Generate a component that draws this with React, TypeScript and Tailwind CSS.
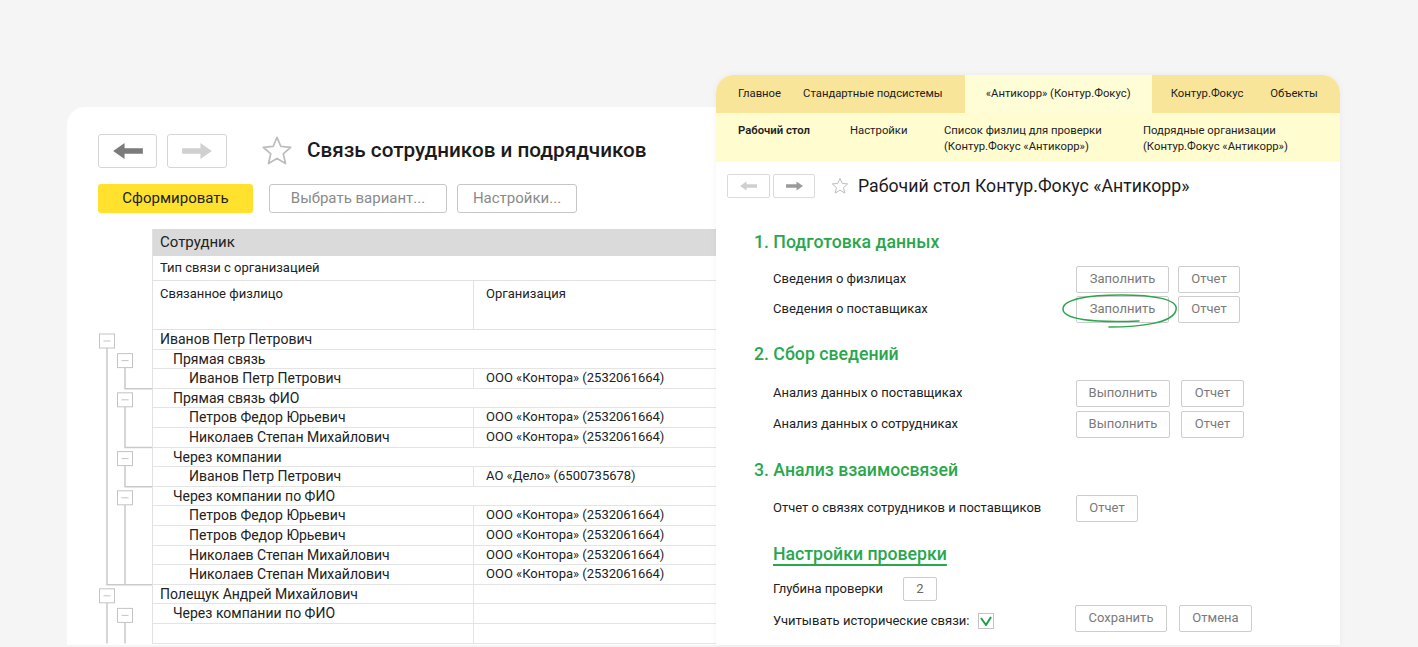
import React from "react";

const ROW_H = 19.6;

type Row = { level: number; name: string; org?: string; split?: boolean };

const KONTORA = "ООО «Контора» (2532061664)";

const rows: Row[] = [
  { level: 0, name: "Иванов Петр Петрович" },
  { level: 1, name: "Прямая связь" },
  { level: 2, name: "Иванов Петр Петрович", org: KONTORA, split: true },
  { level: 1, name: "Прямая связь ФИО" },
  { level: 2, name: "Петров Федор Юрьевич", org: KONTORA, split: true },
  { level: 2, name: "Николаев Степан Михайлович", org: KONTORA, split: true },
  { level: 1, name: "Через компании" },
  { level: 2, name: "Иванов Петр Петрович", org: "АО «Дело» (6500735678)", split: true },
  { level: 1, name: "Через компании по ФИО" },
  { level: 2, name: "Петров Федор Юрьевич", org: KONTORA, split: true },
  { level: 2, name: "Петров Федор Юрьевич", org: KONTORA, split: true },
  { level: 2, name: "Николаев Степан Михайлович", org: KONTORA, split: true },
  { level: 2, name: "Николаев Степан Михайлович", org: KONTORA, split: true },
  { level: 0, name: "Полещук Андрей Михайлович", split: true },
  { level: 1, name: "Через компании по ФИО", split: true },
  { level: 3, name: "", split: true },
];

const indent: Record<number, string> = {
  0: "pl-[7px]",
  1: "pl-[20px]",
  2: "pl-[36px]",
  3: "pl-[7px]",
};

function Arrow({ dir, color, w, h }: { dir: "left" | "right"; color: string; w: number; h: number }) {
  return (
    <svg width={w} height={h} viewBox="0 0 26 14">
      <path
        d="M0 7 L10 0 L10 4.5 L26 4.5 L26 9.5 L10 9.5 L10 14 Z"
        fill={color}
        transform={dir === "right" ? "translate(26 0) scale(-1 1)" : undefined}
      />
    </svg>
  );
}

function Star({ size }: { size: number }) {
  return (
    <svg width={size} height={size} viewBox="0 0 24 24">
      <path
        d="M12 1.8 L14.9 8.6 L22.3 9.2 L16.7 14.1 L18.4 21.4 L12 17.6 L5.6 21.4 L7.3 14.1 L1.7 9.2 L9.1 8.6 Z"
        fill="none"
        stroke="#bdbdbd"
        strokeWidth="1.3"
        strokeLinejoin="round"
      />
    </svg>
  );
}

function TreeGutter() {
  const top = (i: number) => i * ROW_H;
  const bottom = (i: number) => (i + 1) * ROW_H;
  const boxes: { row: number; x: number }[] = [
    { row: 0, x: 1.5 },
    { row: 1, x: 19.5 },
    { row: 3, x: 19.5 },
    { row: 6, x: 19.5 },
    { row: 8, x: 19.5 },
    { row: 13, x: 1.5 },
    { row: 14, x: 19.5 },
  ];
  const total = rows.length * ROW_H;
  const stroke = "#c9c9c9";
  return (
    <svg width={54} height={total} className="block">
      {/* level 0 connectors */}
      <path d={`M9 ${top(0) + 18} V${bottom(12)} H54`} fill="none" stroke={stroke} strokeWidth="1.5" />
      <path d={`M9 ${top(13) + 18} V${total}`} fill="none" stroke={stroke} strokeWidth="1.5" />
      {/* level 1 connectors */}
      <path d={`M27 ${top(1) + 18} V${bottom(2)} H54`} fill="none" stroke={stroke} strokeWidth="1.5" />
      <path d={`M27 ${top(3) + 18} V${bottom(5)} H54`} fill="none" stroke={stroke} strokeWidth="1.5" />
      <path d={`M27 ${top(6) + 18} V${bottom(7)} H54`} fill="none" stroke={stroke} strokeWidth="1.5" />
      <path d={`M27 ${top(8) + 18} V${bottom(12)}`} fill="none" stroke={stroke} strokeWidth="1.5" />
      <path d={`M27 ${top(14) + 18} V${total}`} fill="none" stroke={stroke} strokeWidth="1.5" />
      {boxes.map((b) => (
        <g key={b.row}>
          <rect x={b.x} y={top(b.row) + 4} width={15} height={14} fill="#fff" stroke="#c4c4c4" strokeWidth="1" />
          <line x1={b.x + 4} x2={b.x + 11} y1={top(b.row) + 11} y2={top(b.row) + 11} stroke="#c4c4c4" strokeWidth="1" />
        </g>
      ))}
    </svg>
  );
}

function LeftPanel() {
  return (
    <div className="ml-[67px] h-[538px] w-[700px] rounded-tl-[18px] bg-white pl-[31px] pt-[27px]">
      <div className="flex items-center">
        <div className="flex h-[34px] w-[59px] items-center justify-center rounded-[3px] border border-[#d6d6d6]">
          <Arrow dir="left" color="#7b7b7b" w={30} h={16} />
        </div>
        <div className="ml-[10px] flex h-[34px] w-[60px] items-center justify-center rounded-[3px] border border-[#d6d6d6]">
          <Arrow dir="right" color="#d0d0d0" w={30} h={16} />
        </div>
        <div className="ml-[34px]">
          <Star size={32} />
        </div>
        <h1 className="ml-[14px] text-[20.7px] font-medium text-[#1b1b1b]">Связь сотрудников и подрядчиков</h1>
      </div>

      <div className="mt-[16px] flex items-center gap-[16px] text-[15px]">
        <button className="h-[29px] w-[155px] rounded-[3px] bg-[#ffe12e] text-[#222]">Сформировать</button>
        <button className="h-[29px] w-[178px] rounded-[3px] border border-[#c6c6c6] text-[#8a8a8a]">Выбрать вариант...</button>
        <button className="-ml-[6px] h-[29px] w-[120px] rounded-[3px] border border-[#c6c6c6] text-[#8a8a8a]">Настройки...</button>
      </div>

      <div className="mt-[16px] flex">
        <div className="w-[54px] shrink-0 pt-[101px]">
          <TreeGutter />
        </div>
        <div className="flex-1 border-l border-[#e1e1e1] text-[#222]">
          <div className="flex h-[27px] items-center bg-[#dadada] pl-[7px] text-[15px]">Сотрудник</div>
          <div className="flex h-[25px] items-center border-b border-[#e1e1e1] pl-[7px] text-[13px]">Тип связи с организацией</div>
          <div className="flex h-[49px] border-b border-[#e1e1e1] text-[13px]">
            <div className="w-[321px] border-r border-[#e1e1e1] pl-[7px] pt-[3px]">Связанное физлицо</div>
            <div className="pl-[12px] pt-[3px]">Организация</div>
          </div>
          {rows.map((r, i) => (
            <div key={i} className="flex h-[19.6px] border-b border-[#e4e4e4] text-[14px] leading-[18px]">
              <div className={`${indent[r.level]} ${r.split ? "w-[321px] border-r border-[#e4e4e4]" : ""} whitespace-nowrap`}>
                {r.name}
              </div>
              {r.org && <div className="pl-[12px] text-[13px] whitespace-nowrap">{r.org}</div>}
            </div>
          ))}
        </div>
      </div>
    </div>
  );
}

function Btn({ w, children }: { w: string; children: React.ReactNode }) {
  return (
    <div className={`${w} flex h-[27px] items-center justify-center rounded-[2px] border border-[#cdcdcd] text-[13px] text-[#7a7a7a]`}>
      {children}
    </div>
  );
}

function Heading({ children, className = "" }: { children: React.ReactNode; className?: string }) {
  return (
    <div className={`flex h-[24px] items-center pl-[38px] text-[17.7px] font-medium text-[#2aa74d] ${className}`}>{children}</div>
  );
}

function Line({ label, children, className = "" }: { label: string; children?: React.ReactNode; className?: string }) {
  return (
    <div className={`flex items-center pl-[57px] ${className}`}>
      <div className="w-[303px] text-[13px] text-[#222]">{label}</div>
      {children}
    </div>
  );
}

function RightPanel() {
  return (
    <div className="absolute left-[716px] top-[75px] h-[570px] w-[624px] overflow-hidden rounded-t-[18px] bg-white shadow-[0_0_6px_rgba(0,0,0,0.05)]">
      <div className="flex h-[38px] items-stretch bg-[#f9e59a] text-[11.3px] text-[#222]">
        <span className="self-center pl-[22px]">Главное</span>
        <span className="ml-[22px] self-center">Стандартные подсистемы</span>
        <span className="ml-[22px] flex w-[187px] items-center justify-center bg-[#fffdd6]">«Антикорр» (Контур.Фокус)</span>
        <span className="ml-[19px] self-center">Контур.Фокус</span>
        <span className="ml-[27px] self-center">Объекты</span>
      </div>
      <div className="flex h-[49px] bg-[#fffdd0] pl-[22px] pt-[10px] text-[11.3px] leading-[16px] text-[#222]">
        <div className="w-[112px] font-semibold">Рабочий стол</div>
        <div className="w-[94px]">Настройки</div>
        <div className="w-[199px]">
          Список физлиц для проверки
          <br />
          (Контур.Фокус «Антикорр»)
        </div>
        <div>
          Подрядные организации
          <br />
          (Контур.Фокус «Антикорр»)
        </div>
      </div>

      <div className="mt-[11px] flex items-center pl-[11px]">
        <div className="flex h-[24px] w-[43px] items-center justify-center rounded-[2px] border border-[#dadada]">
          <Arrow dir="left" color="#cfcfcf" w={17} h={10} />
        </div>
        <div className="ml-[3px] flex h-[24px] w-[42px] items-center justify-center rounded-[2px] border border-[#dadada]">
          <Arrow dir="right" color="#9a9a9a" w={17} h={10} />
        </div>
        <div className="ml-[16px]">
          <Star size={18} />
        </div>
        <div className="ml-[9px] text-[17.7px] text-[#1b1b1b]">Рабочий стол Контур.Фокус «Антикорр»</div>
      </div>

      <Heading className="mt-[31px]">1. Подготовка данных</Heading>
      <Line label="Сведения о физлицах" className="mt-[11px]">
        <Btn w="w-[93px]">Заполнить</Btn>
        <div className="ml-[9px]">
          <Btn w="w-[62px]">Отчет</Btn>
        </div>
      </Line>
      <Line label="Сведения о поставщиках" className="mt-[3px]">
        <div className="relative">
          <Btn w="w-[93px]">Заполнить</Btn>
          <svg width="120" height="38" className="absolute -left-[15px] -top-[4px]" viewBox="0 0 120 38">
            <path
              d="M48 35 C80 35 112 31 115 18 C118 7 92 3 60 3 C28 3 2 7 2 17 C2 27 30 31 78 29"
              fill="none"
              stroke="#2aa74d"
              strokeWidth="1.5"
              strokeLinecap="round"
            />
          </svg>
        </div>
        <div className="ml-[9px]">
          <Btn w="w-[62px]">Отчет</Btn>
        </div>
      </Line>

      <Heading className="mt-[20px]">2. Сбор сведений</Heading>
      <Line label="Анализ данных о поставщиках" className="mt-[13px]">
        <Btn w="w-[94px]">Выполнить</Btn>
        <div className="ml-[11px]">
          <Btn w="w-[63px]">Отчет</Btn>
        </div>
      </Line>
      <Line label="Анализ данных о сотрудниках" className="mt-[4px]">
        <Btn w="w-[94px]">Выполнить</Btn>
        <div className="ml-[11px]">
          <Btn w="w-[63px]">Отчет</Btn>
        </div>
      </Line>

      <Heading className="mt-[21px]">3. Анализ взаимосвязей</Heading>
      <Line label="Отчет о связях сотрудников и поставщиков" className="mt-[12px]">
        <Btn w="w-[62px]">Отчет</Btn>
      </Line>

      <div className="mt-[21px] flex h-[24px] items-center pl-[57px] text-[17.7px] font-medium text-[#2aa74d]">
        <span className="underline decoration-[1.5px] underline-offset-[4px]">Настройки проверки</span>
      </div>

      <div className="mt-[10px] flex items-center pl-[57px]">
        <div className="w-[130px] text-[13px] text-[#222]">Глубина проверки</div>
        <div className="flex h-[24px] w-[34px] items-center justify-center rounded-[2px] border border-[#cdcdcd] text-[13px] text-[#666]">
          2
        </div>
      </div>

      <div className="mt-[4px] flex items-center pl-[57px]">
        <div className="mt-[5px] w-[205px] text-[13px] text-[#222]">Учитывать исторические связи:</div>
        <div className="mt-[5px] flex h-[16px] w-[16px] items-center justify-center border border-[#c4c4c4]">
          <svg width="12" height="10" viewBox="0 0 12 10">
            <path d="M1 2 L6 9 L11 1" fill="none" stroke="#1f9e45" strokeWidth="2" strokeLinejoin="round" />
          </svg>
        </div>
        <div className="ml-[81px]">
          <Btn w="w-[92px]">Сохранить</Btn>
        </div>
        <div className="ml-[12px]">
          <Btn w="w-[73px]">Отмена</Btn>
        </div>
      </div>
    </div>
  );
}

export default function App() {
  return (
    <div
      className="relative h-[647px] w-full overflow-hidden bg-[#f5f5f5] pt-[107px]"
      style={{ fontFamily: "Roboto, 'Liberation Sans', sans-serif" }}
    >
      <LeftPanel />
      <RightPanel />
    </div>
  );
}
